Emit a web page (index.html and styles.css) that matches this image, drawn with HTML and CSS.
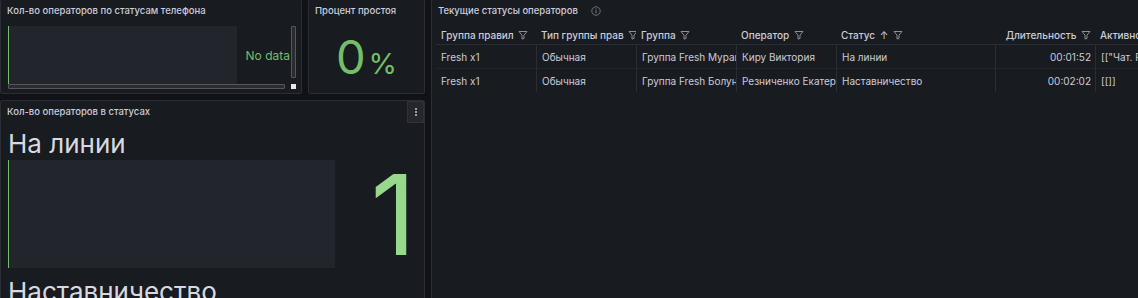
FILE: index.html
```html
<!DOCTYPE html>
<html lang="ru">
<head>
    <meta charset="UTF-8">
    <title>Статусы операторов</title>
    <link rel="stylesheet" href="styles.css">
</head>
<body>
    <div class="dashboard">
        <section class="panel phone-panel">
            <div class="panel-header"><h2>Кол-во операторов по статусам телефона</h2></div>
            <div class="scroll-area">
                <div class="viewport">
                    <div class="gauge-bar small"></div>
                    <span class="no-data">No data</span>
                </div>
                <div class="vscroll"></div>
                <div class="hscroll"></div>
                <div class="corner"></div>
            </div>
        </section>

        <section class="panel idle-panel">
            <div class="panel-header"><h2>Процент простоя</h2></div>
            <div class="stat">0<span class="unit">%</span></div>
        </section>

        <section class="panel status-panel">
            <div class="panel-header"><h2>Кол-во операторов в статусах</h2></div>
            <button class="panel-menu" title="Меню"><span></span><span></span><span></span></button>
            <div class="gauge-list">
                <div class="gauge-item">
                    <div class="gauge-label">На линии</div>
                    <div class="gauge-row">
                        <div class="gauge-bar big"></div>
                        <div class="gauge-value">1</div>
                    </div>
                </div>
                <div class="gauge-item">
                    <div class="gauge-label">Наставничество</div>
                    <div class="gauge-row">
                        <div class="gauge-bar big"></div>
                        <div class="gauge-value">1</div>
                    </div>
                </div>
            </div>
        </section>

        <section class="panel table-panel">
            <div class="panel-header">
                <h2>Текущие статусы операторов</h2>
                <svg class="info" width="10" height="10" viewBox="0 0 10 10"><circle cx="5" cy="5" r="4.2" fill="none" stroke="#6e7079" stroke-width="1"/><rect x="4.4" y="4.2" width="1.2" height="3" fill="#6e7079"/><rect x="4.4" y="2.5" width="1.2" height="1" fill="#6e7079"/></svg>
            </div>
            <table class="ops">
                <colgroup>
                    <col style="width:100px"><col style="width:100px"><col style="width:100px">
                    <col style="width:100px"><col style="width:159px"><col style="width:100px"><col>
                </colgroup>
                <thead>
                    <tr>
                        <th>Группа правил <svg class="funnel" viewBox="0 0 10 10"><path d="M1 1.5h8L6 5.2v3.3L4 9V5.2z" fill="none" stroke="currentColor" stroke-width="1"/></svg></th>
                        <th>Тип группы прав <svg class="funnel" viewBox="0 0 10 10"><path d="M1 1.5h8L6 5.2v3.3L4 9V5.2z" fill="none" stroke="currentColor" stroke-width="1"/></svg></th>
                        <th>Группа <svg class="funnel" viewBox="0 0 10 10"><path d="M1 1.5h8L6 5.2v3.3L4 9V5.2z" fill="none" stroke="currentColor" stroke-width="1"/></svg></th>
                        <th>Оператор <svg class="funnel" viewBox="0 0 10 10"><path d="M1 1.5h8L6 5.2v3.3L4 9V5.2z" fill="none" stroke="currentColor" stroke-width="1"/></svg></th>
                        <th>Статус <span class="sort">↑</span> <svg class="funnel" viewBox="0 0 10 10"><path d="M1 1.5h8L6 5.2v3.3L4 9V5.2z" fill="none" stroke="currentColor" stroke-width="1"/></svg></th>
                        <th class="num">Длительность <svg class="funnel" viewBox="0 0 10 10"><path d="M1 1.5h8L6 5.2v3.3L4 9V5.2z" fill="none" stroke="currentColor" stroke-width="1"/></svg></th>
                        <th>Активно</th>
                    </tr>
                </thead>
                <tbody>
                    <tr>
                        <td>Fresh x1</td>
                        <td>Обычная</td>
                        <td>Группа Fresh Мураш</td>
                        <td>Киру Виктория</td>
                        <td>На линии</td>
                        <td class="num">00:01:52</td>
                        <td>[["Чат. F</td>
                    </tr>
                    <tr>
                        <td>Fresh x1</td>
                        <td>Обычная</td>
                        <td>Группа Fresh Болуне</td>
                        <td>Резниченко Екатери</td>
                        <td>Наставничество</td>
                        <td class="num">00:02:02</td>
                        <td>[[]]</td>
                    </tr>
                </tbody>
            </table>
        </section>
    </div>
</body>
</html>
```

FILE: styles.css
```css
body {
    margin: 0;
    width: 1138px;
    height: 298px;
    overflow: hidden;
    background-color: #111217;
    color: #ccccdc;
    font-family: Inter, "Noto Sans", sans-serif;
}
.dashboard {
    display: grid;
    grid-template-columns: 302px 117px 720px;
    grid-template-rows: 95px 230px;
    column-gap: 6px;
    row-gap: 6px;
    margin-top: -1px;
}
.panel {
    position: relative;
    background-color: #181b1f;
    border: 1px solid #2a2d33;
    border-radius: 2px;
    overflow: hidden;
}
.panel-header {
    display: flex;
    align-items: center;
    height: 21px;
    padding: 0 6px;
}
.panel-header h2 {
    margin: 0;
    font-size: 9.5px;
    font-weight: 500;
    white-space: nowrap;
}
.info {
    margin-left: 13px;
}

/* телефонные статусы */
.phone-panel {
    grid-column: 1;
    grid-row: 1;
}
.scroll-area {
    display: grid;
    grid-template-columns: 282px 5px;
    grid-template-rows: 58px 5px;
    column-gap: 1px;
    padding: 5px 0 0 7px;
}
.viewport {
    display: flex;
    align-items: center;
    justify-content: space-between;
}
.gauge-bar {
    background-color: #22252b;
    border-left: 1px solid #73bf69;
}
.gauge-bar.small {
    width: 228px;
    height: 58px;
}
.no-data {
    color: #73bf69;
    font-size: 12px;
}
.vscroll {
    height: 52px;
    border: 1px solid #55575d;
    border-radius: 1px;
    background-color: #2a2c31;
    box-sizing: border-box;
}
.hscroll {
    width: 277px;
    height: 5px;
    border: 1px solid #55575d;
    border-radius: 1px;
    background-color: #2a2c31;
    box-sizing: border-box;
}
.corner {
    background-color: #e8e8ea;
}

/* процент простоя */
.idle-panel {
    grid-column: 2;
    grid-row: 1;
    display: flex;
    flex-direction: column;
}
.stat {
    flex-grow: 1;
    display: flex;
    align-items: baseline;
    justify-content: center;
    padding-top: 12px;
    color: #73bf69;
    font-size: 47px;
    line-height: 1;
}
.stat .unit {
    font-size: 29px;
    margin-left: 3px;
}

/* операторы в статусах */
.status-panel {
    grid-column: 1 / span 2;
    grid-row: 2;
}
.panel-menu {
    position: absolute;
    top: 0;
    right: 0;
    width: 17px;
    height: 22px;
    padding: 0;
    border: 1px solid #303238;
    background-color: #25272d;
    display: flex;
    flex-direction: column;
    align-items: center;
    justify-content: center;
    gap: 1px;
}
.panel-menu span {
    width: 2px;
    height: 2px;
    background-color: #9a9ca3;
}
.gauge-list {
    padding: 6px 7px 0 7px;
    display: flex;
    flex-direction: column;
    gap: 8px;
}
.gauge-label {
    font-size: 26px;
    line-height: 32px;
    color: #d8d9e0;
}
.gauge-row {
    display: flex;
    align-items: center;
    height: 108px;
}
.gauge-bar.big {
    width: 326px;
    height: 108px;
}
.gauge-value {
    flex-grow: 1;
    text-align: right;
    padding-right: 1px;
    color: #96d98d;
    font-size: 112px;
    line-height: 1;
}

/* таблица */
.table-panel {
    grid-column: 3;
    grid-row: 1 / span 2;
    border-right: none;
}
.ops {
    margin: 4px 0 0 4px;
    table-layout: fixed;
    width: 740px;
    border-collapse: separate;
    border-spacing: 0;
    font-size: 10px;
}
.ops th,
.ops td {
    padding: 0 5px;
    text-align: left;
    white-space: nowrap;
    overflow: hidden;
}
.ops th {
    height: 19px;
    font-weight: 500;
    border-bottom: 1px solid #2a2d33;
}
.ops td {
    height: 23px;
    border-bottom: 1px solid #22252b;
}
.ops td + td {
    border-left: 1px solid #2a2d33;
}
.ops tbody tr:last-child td {
    border-bottom: none;
}
.ops .num {
    text-align: right;
    padding-right: 4px;
}
.funnel {
    width: 10px;
    height: 10px;
    margin-left: 2px;
    vertical-align: -1px;
    color: #8e8e93;
}
.sort {
    color: #b5b7bf;
    margin-left: 2px;
}
```
